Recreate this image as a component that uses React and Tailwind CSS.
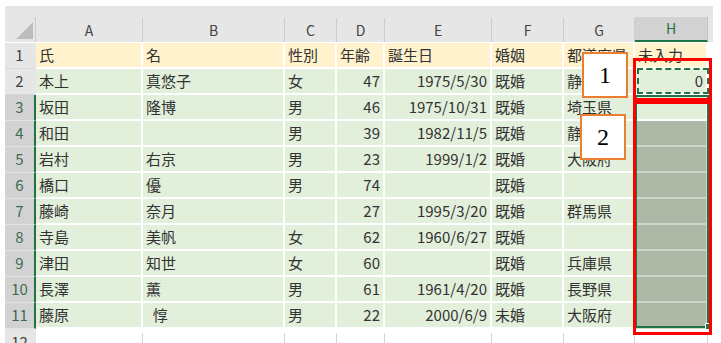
const COLS = [
  { key: "A", align: "left" },
  { key: "B", align: "left" },
  { key: "C", align: "left" },
  { key: "D", align: "right" },
  { key: "E", align: "right" },
  { key: "F", align: "left" },
  { key: "G", align: "left" },
  { key: "H", align: "right" },
];

const ROWS = [
  ["氏", "名", "性別", "年齢", "誕生日", "婚姻", "都道府県", "未入力"],
  ["本上", "真悠子", "女", "47", "1975/5/30", "既婚", "静岡県", "0"],
  ["坂田", "隆博", "男", "46", "1975/10/31", "既婚", "埼玉県", ""],
  ["和田", "", "男", "39", "1982/11/5", "既婚", "静岡県", ""],
  ["岩村", "右京", "男", "23", "1999/1/2", "既婚", "大阪府", ""],
  ["橋口", "優", "男", "74", "", "既婚", "", ""],
  ["藤崎", "奈月", "", "27", "1995/3/20", "既婚", "群馬県", ""],
  ["寺島", "美帆", "女", "62", "1960/6/27", "既婚", "", ""],
  ["津田", "知世", "女", "60", "", "既婚", "兵庫県", ""],
  ["長澤", "薫", "男", "61", "1961/4/20", "既婚", "長野県", ""],
  ["藤原", "  惇", "男", "22", "2000/6/9", "未婚", "大阪府", ""],
];

const font = { fontFamily: '"Noto Sans CJK JP", "Noto Sans", sans-serif' };

function ColHeader({ label, active }) {
  if (active) {
    return (
      <div className="h-[25px] bg-[#d2d2d2] border-b-2 border-[#217346] border-r border-r-[#c4c4c4] flex items-center justify-center text-[14px] text-[#217346]">
        {label}
      </div>
    );
  }
  return (
    <div className="h-[25px] bg-[#e6e6e6] flex items-end">
      <div className="h-[24px] w-full border-r border-[#cdcdcd] flex items-center justify-center text-[14px] text-[#444]">
        {label}
      </div>
    </div>
  );
}

function RowHeader({ n, selected }) {
  if (selected) {
    return (
      <div className="h-[26px] bg-[#d2d2d2] border-b border-[#e2e2e2] border-r-2 border-r-[#217346] flex items-center justify-center text-[15px] text-[#3d6b50]">
        {n}
      </div>
    );
  }
  return (
    <div className="h-[26px] bg-[#e6e6e6] border-b border-[#dadada] border-r-2 border-r-[#e6e6e6] flex items-center justify-center text-[15px] text-[#444]">
      {n}
    </div>
  );
}

function Cell({ value, align, tone }) {
  const bg =
    tone === "head"
      ? "bg-[#fff2cc]"
      : tone === "sel"
      ? "bg-[#adb9a6] border-b-[#cfd3cb] border-r-[#cfd3cb]"
      : "bg-[#e2efda]";
  const justify = align === "right" ? "justify-end" : "justify-start";
  return (
    <div
      className={`h-[26px] border-r-2 border-b-2 border-white flex items-center px-[3px] overflow-hidden whitespace-pre text-[15px] text-[#333] ${bg} ${justify}`}
    >
      {value}
    </div>
  );
}

function NoteBox({ n, className }) {
  return (
    <div
      className={`absolute w-[46px] h-[46px] bg-white border-[2.5px] border-[#ed7d31] flex items-center justify-center text-[24px] text-black ${className}`}
      style={{ fontFamily: '"Liberation Serif", serif' }}
    >
      {n}
    </div>
  );
}

export default function App() {
  return (
    <div className="relative w-[721px] h-[343px] overflow-hidden bg-white pt-[6px] pl-[5px]" style={font}>
      <div className="w-[708px] h-[11px] bg-[#e6e6e6]" />

      <div className="grid grid-cols-[31px_107px_142px_52px_48px_107px_72px_71px_73px_5px] w-[708px]">
        {/* column headers */}
        <div className="h-[25px] bg-[#e6e6e6] border-r border-[#cdcdcd] relative">
          <svg className="absolute left-[11px] top-[5px]" width="17" height="17" viewBox="0 0 17 17">
            <polygon points="17,0 17,17 0,17" fill="#bdbdbd" />
          </svg>
        </div>
        {COLS.map((c) => (
          <ColHeader key={c.key} label={c.key} active={c.key === "H"} />
        ))}
        <div className="h-[25px] bg-[#e6e6e6]" />

        {/* white line under headers */}
        <div className="col-span-10 h-px bg-white" />

        {ROWS.map((row, r) => (
          <div key={r} className="contents">
            <RowHeader n={r + 1} selected={r >= 2} />
            {row.map((v, c) => {
              const tone = r === 0 ? "head" : c === 7 && r >= 3 ? "sel" : "data";
              // title row is all left aligned; numbers and dates sit to the right
              const align = r === 0 ? "left" : COLS[c].align;
              return <Cell key={c} value={v} align={align} tone={tone} />;
            })}
            <div className="h-[26px] bg-white" />
          </div>
        ))}

        {/* row 12, cut off at the bottom */}
        <div className="h-[20px] bg-[#e6e6e6] border-r-2 border-[#e6e6e6] flex justify-center pt-[2px] text-[15px] text-[#444] overflow-hidden">
          12
        </div>
        {COLS.map((c) => (
          <div key={c.key} className="h-[20px] bg-white pt-[4px]">
            <div className="h-full border-r border-[#d4d4d4]" />
          </div>
        ))}
        <div className="h-[20px] bg-white" />
      </div>

      {/* copy marquee on H2 */}
      <div className="absolute left-[637px] top-[68px] w-[72px] h-[26px] border-2 border-dashed border-[#217346]" />

      {/* selection outline H3:H11 */}
      <div className="absolute left-[635px] top-[95px] w-[74px] h-[233px] border-2 border-[#217346]" />
      <div className="absolute left-[705px] top-[323px] w-[7px] h-[7px] bg-[#217346] border border-white" />

      {/* red call-outs */}
      <div className="absolute left-[633px] top-[58px] w-[79px] h-[43px] border-[3px] border-[#ff0000]" />
      <div className="absolute left-[633px] top-[101px] w-[79px] h-[234px] border-[3px] border-[#ff0000]" />

      <NoteBox n="1" className="left-[582px] top-[52px]" />
      <NoteBox n="2" className="left-[580px] top-[114px]" />
    </div>
  );
}
